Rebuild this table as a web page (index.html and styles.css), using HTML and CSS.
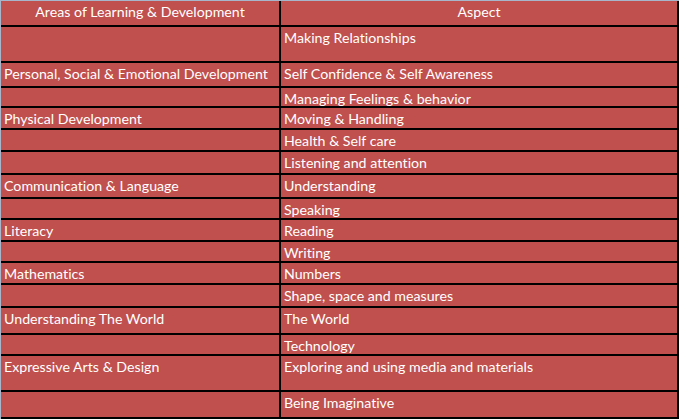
FILE: index.html
```html
<!DOCTYPE html>
<html>
<head>
<meta charset="utf-8">
<link rel="stylesheet" href="styles.css">
</head>
<body>
<table class="grid">
  <colgroup><col class="c-area"><col class="c-aspect"></colgroup>
  <tr class="head h24"><td>Areas of Learning &amp; Development</td><td>Aspect</td></tr>
  <tr class="h34"><td></td><td>Making Relationships</td></tr>
  <tr class="h23"><td>Personal, Social &amp; Emotional Development</td><td>Self Confidence &amp; Self Awareness</td></tr>
  <tr class="h18"><td></td><td>Managing Feelings &amp; behavior</td></tr>
  <tr class="h20"><td>Physical Development</td><td>Moving &amp; Handling</td></tr>
  <tr class="h20"><td></td><td>Health &amp; Self care</td></tr>
  <tr class="h21"><td></td><td>Listening and attention</td></tr>
  <tr class="h22"><td>Communication &amp; Language</td><td>Understanding</td></tr>
  <tr class="h19"><td></td><td>Speaking</td></tr>
  <tr class="h20"><td>Literacy</td><td>Reading</td></tr>
  <tr class="h19"><td></td><td>Writing</td></tr>
  <tr class="h20"><td>Mathematics</td><td>Numbers</td></tr>
  <tr class="h21"><td></td><td>Shape, space and measures</td></tr>
  <tr class="h25"><td>Understanding The World</td><td>The World</td></tr>
  <tr class="h19"><td></td><td>Technology</td></tr>
  <tr class="h34"><td>Expressive Arts &amp; Design</td><td>Exploring and using media and materials</td></tr>
  <tr class="h25"><td></td><td>Being Imaginative</td></tr>
</table>
</body>
</html>
```
FILE: styles.css
```css
html, body {
  margin: 0;
  padding: 0;
  background: #ffffff;
}
.grid {
  border-collapse: separate;
  border-spacing: 0;
  table-layout: fixed;
  width: 679px;
  border-top: 1px solid #a8b6cc;
  border-left: 1px solid #a8b6cc;
  font-family: Lato, "Liberation Sans", sans-serif;
  font-size: 14.2px;
  line-height: 15px;
  font-variant-ligatures: none;
  color: #ffffff;
}
.c-area { width: 280px; }
.c-aspect { width: 398px; }
.grid td {
  background: #c0504d;
  border-right: 2px solid #000;
  border-bottom: 2px solid #000;
  padding: 3px 0 0 3px;
  vertical-align: top;
  white-space: nowrap;
  overflow: hidden;
  box-sizing: border-box;
}
.head td { text-align: center; padding-left: 0; }
.h18 td { height: 20px; }
.h19 td { height: 21px; }
.h20 td { height: 22px; }
.h21 td { height: 23px; }
.h22 td { height: 24px; }
.h23 td { height: 25px; }
.h24 td { height: 26px; }
.h25 td { height: 27px; }
.h34 td { height: 36px; }
```
